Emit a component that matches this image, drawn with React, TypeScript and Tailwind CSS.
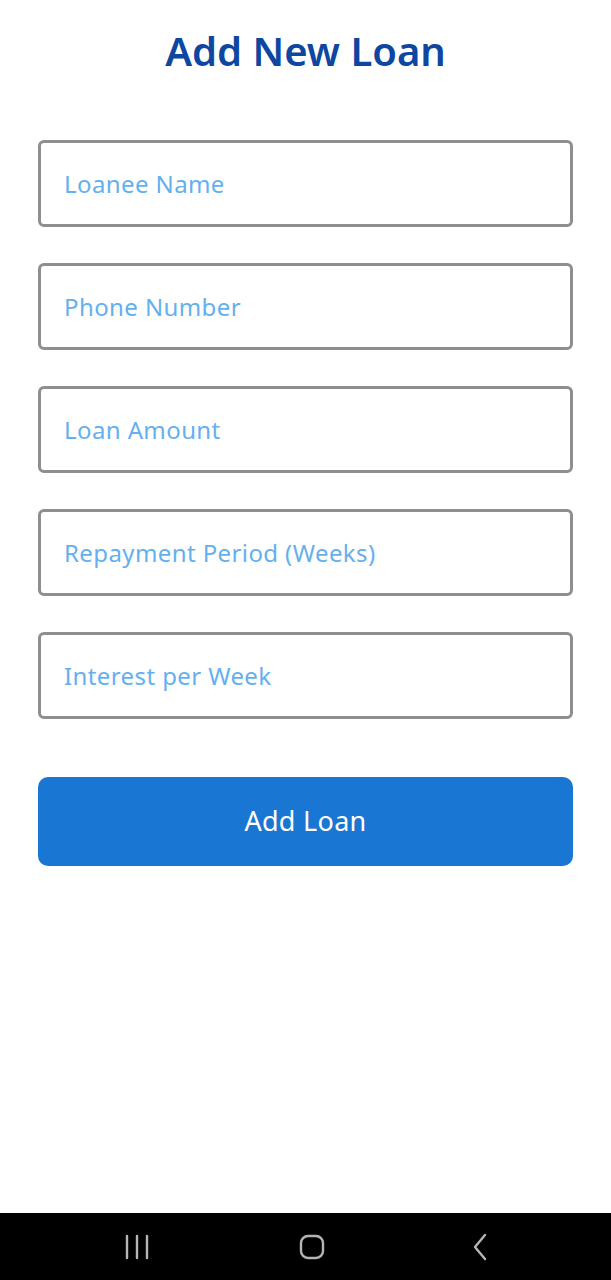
const fields = [
  "Loanee Name",
  "Phone Number",
  "Loan Amount",
  "Repayment Period (Weeks)",
  "Interest per Week",
];

export default function App() {
  return (
    <div
      className="w-[611px] h-[1280px] bg-white flex flex-col"
      style={{ fontFamily: '"Noto Sans", "Open Sans", sans-serif' }}
    >
      <div className="flex-1 px-[38px]">
        <h1 className="mt-[24px] text-center text-[40px] leading-[54px] font-semibold text-[#0d47a1]">
          Add New Loan
        </h1>
        <div className="mt-[62px] flex flex-col gap-[36px]">
          {fields.map((f) => (
            <input
              key={f}
              placeholder={f}
              className="h-[87px] w-full rounded-[6px] border-[3px] border-[#8e8e8e] px-[23px] text-[24px] tracking-[0.4px] outline-none placeholder:text-[#64b0ee]"
            />
          ))}
        </div>
        <button className="mt-[58px] h-[89px] w-full rounded-[10px] bg-[#1976d2] text-[27px] tracking-[0.3px] text-white">
          Add Loan
        </button>
      </div>
      <div className="h-[67px] bg-black flex items-center justify-between px-[123px]">
        <svg width="28" height="26" viewBox="0 0 28 26" fill="none" stroke="#b5b5b5" strokeWidth="2.4" strokeLinecap="round">
          <path d="M4 2v22M14 2v22M24 2v22" />
        </svg>
        <svg width="26" height="26" viewBox="0 0 26 26" fill="none" stroke="#b5b5b5" strokeWidth="2.4">
          <rect x="2" y="2" width="22" height="22" rx="7" />
        </svg>
        <svg width="16" height="28" viewBox="0 0 16 28" fill="none" stroke="#b5b5b5" strokeWidth="2.4" strokeLinecap="round" strokeLinejoin="round">
          <path d="M13 2L3 14l10 12" />
        </svg>
      </div>
    </div>
  );
}
